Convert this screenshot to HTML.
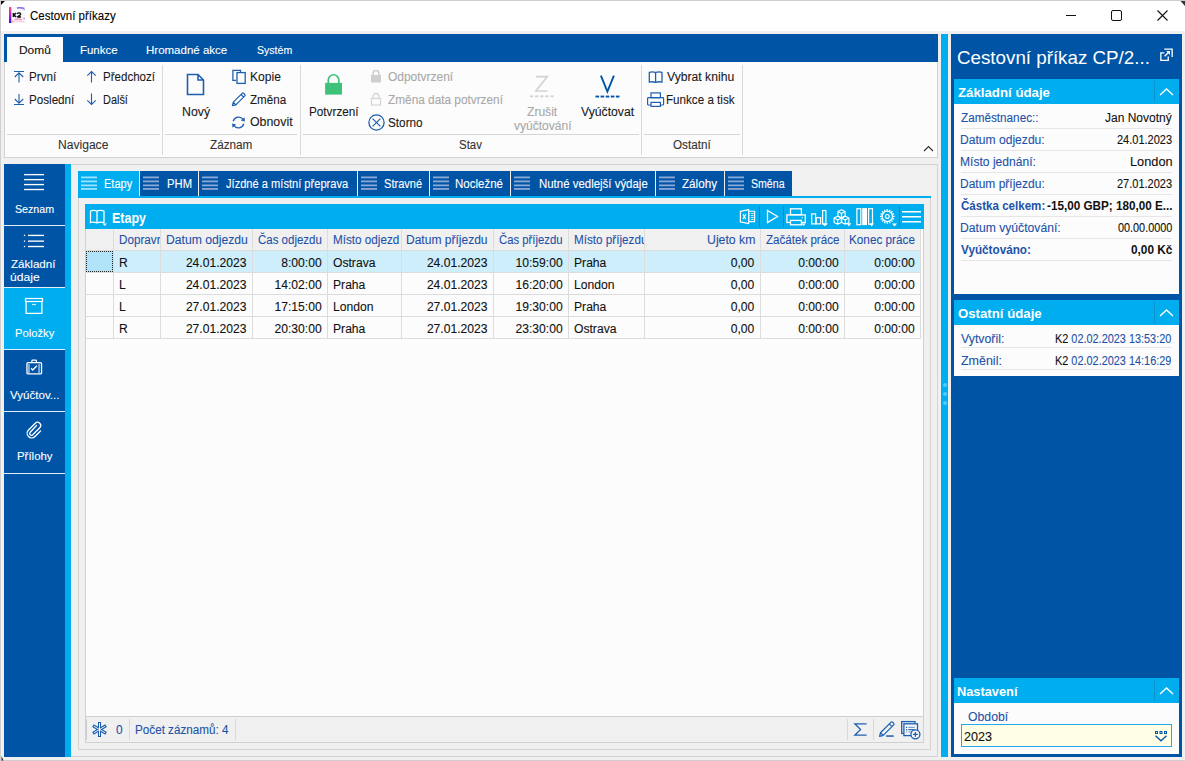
<!DOCTYPE html>
<html><head><meta charset="utf-8"><style>
html,body{margin:0;padding:0;width:1186px;height:761px;overflow:hidden;position:relative;background:#f0f0f0}
body{font-family:"Liberation Sans",sans-serif}
.t{position:absolute;white-space:nowrap;-webkit-text-stroke:0.1px currentColor}
svg{overflow:visible}
</style></head><body>
<div style="position:absolute;left:0px;top:0px;width:1186px;height:761px;background:#f0f0f0"></div>
<div style="position:absolute;left:0px;top:0px;width:1186px;height:31px;background:#ffffff"></div>
<div style="position:absolute;left:0px;top:0px;width:1186px;height:1px;background:#cfcfcf"></div>
<div style="position:absolute;left:0px;top:0px;width:1px;height:761px;background:#cfcfcf"></div>
<div style="position:absolute;left:1185px;top:0px;width:1px;height:761px;background:#cfcfcf"></div>
<div style="position:absolute;left:0px;top:760px;width:1186px;height:1px;background:#cfcfcf"></div>
<svg style="position:absolute;left:0;top:0" width="8" height="8"><path d="M1 1 H5 L1 5 Z" fill="#111"/></svg>
<svg style="position:absolute;left:1176px;top:0" width="10" height="10"><path d="M9 1 H4.5 L9 6 Z" fill="#333"/></svg>
<svg style="position:absolute;left:0;top:752px" width="8" height="9"><path d="M1.5 4 L3.5 8.5 L1.5 8.5 Z" fill="#222"/></svg>
<svg style="position:absolute;left:9px;top:7px" width="16" height="16" viewBox="0 0 16 16"><defs><linearGradient id="lg" x1="0" y1="0" x2="0" y2="1"><stop offset="0" stop-color="#ff5060"/><stop offset="0.5" stop-color="#cc10e0"/><stop offset="1" stop-color="#2010ff"/></linearGradient></defs>
<rect x="0" y="0" width="16" height="16" fill="#f8f8fc"/><rect x="0" y="0" width="2.3" height="16" fill="url(#lg)"/>
<path d="M8 1.1 Q11.5 0.3 15.4 1.4" stroke="#6a50f0" stroke-width="1.5" fill="none" opacity="0.85"/><circle cx="15.2" cy="2.6" r="0.9" fill="#a080f0" opacity="0.7"/>
<path d="M5.5 12.6 Q9.5 11.2 13 12.8" stroke="#f070a0" stroke-width="1.4" fill="none" opacity="0.7"/><path d="M2.6 14.6 Q8 13.6 15.4 14.8" stroke="#f8b0c8" stroke-width="1.4" fill="none" opacity="0.6"/><circle cx="15.1" cy="11.6" r="1" fill="#c070f0" opacity="0.7"/><rect x="2.3" y="13.6" width="2" height="2" fill="#ff9a70" opacity="0.7"/>
<path d="M4.4 6 V10 M7.1 6 L4.9 8 L7.2 10" stroke="#111" stroke-width="1.5" fill="none"/><path d="M8.1 6.9 Q8.8 5.8 10.2 5.9 Q11.8 6.1 11.5 7.5 Q11.2 8.4 8.2 10 H12.1" stroke="#111" stroke-width="1.4" fill="none"/></svg>
<div class="t" style="left:29.82px;top:8.27px;font-size:12.5px;line-height:16px;color:#000;font-weight:normal;transform:scaleX(0.9200);transform-origin:0 0;">Cestovní příkazy</div>
<div style="position:absolute;left:1066px;top:15px;width:10px;height:1px;background:#111"></div>
<svg style="position:absolute;left:1111px;top:10px" width="11" height="11" viewBox="0 0 11 11"><rect x="0.5" y="0.5" width="10" height="10" rx="1.5" fill="none" stroke="#111" stroke-width="1"/></svg>
<svg style="position:absolute;left:1157px;top:10px" width="11" height="11" viewBox="0 0 11 11"><path d="M0.5 0.5 L10.5 10.5 M10.5 0.5 L0.5 10.5" stroke="#111" stroke-width="1.1"/></svg>
<div style="position:absolute;left:4px;top:34px;width:934px;height:28px;background:#0054a6"></div>
<div style="position:absolute;left:7px;top:37px;width:56px;height:25px;background:#fcfcfc"></div>
<div class="t" style="left:18.64px;top:43.48px;font-size:11.3px;line-height:14px;color:#111;font-weight:normal;transform:scaleX(1.0570);transform-origin:0 0;">Domů</div>
<div class="t" style="left:79.68px;top:43.48px;font-size:11.3px;line-height:14px;color:#fff;font-weight:normal;transform:scaleX(1.0142);transform-origin:0 0;">Funkce</div>
<div class="t" style="left:146.28px;top:43.48px;font-size:11.3px;line-height:14px;color:#fff;font-weight:normal;transform:scaleX(1.0178);transform-origin:0 0;">Hromadné akce</div>
<div class="t" style="left:257.17px;top:43.48px;font-size:11.3px;line-height:14px;color:#fff;font-weight:normal;transform:scaleX(0.9344);transform-origin:0 0;">Systém</div>
<div style="position:absolute;left:4px;top:62px;width:934px;height:96px;background:#fcfcfc;box-sizing:border-box;border:1px solid #d2d2d2;border-top:none"></div>
<div style="position:absolute;left:162px;top:65px;width:1px;height:90px;background:#dadada"></div>
<div style="position:absolute;left:300px;top:65px;width:1px;height:90px;background:#dadada"></div>
<div style="position:absolute;left:641px;top:65px;width:1px;height:90px;background:#dadada"></div>
<div style="position:absolute;left:742px;top:65px;width:1px;height:90px;background:#dadada"></div>
<div style="position:absolute;left:7px;top:134px;width:153px;height:1px;background:#d6d6d6"></div>
<div style="position:absolute;left:165px;top:134px;width:132px;height:1px;background:#d6d6d6"></div>
<div style="position:absolute;left:303px;top:134px;width:336px;height:1px;background:#d6d6d6"></div>
<div style="position:absolute;left:644px;top:134px;width:96px;height:1px;background:#d6d6d6"></div>
<div class="t" style="left:58.23px;top:136.77px;font-size:12.5px;line-height:16px;color:#333;font-weight:normal;transform:scaleX(0.9663);transform-origin:0 0;">Navigace</div>
<div class="t" style="left:209.65px;top:136.77px;font-size:12.5px;line-height:16px;color:#333;font-weight:normal;transform:scaleX(0.9386);transform-origin:0 0;">Záznam</div>
<div class="t" style="left:459.43px;top:136.77px;font-size:12.5px;line-height:16px;color:#333;font-weight:normal;transform:scaleX(0.9149);transform-origin:0 0;">Stav</div>
<div class="t" style="left:673.31px;top:136.77px;font-size:12.5px;line-height:16px;color:#333;font-weight:normal;transform:scaleX(0.9363);transform-origin:0 0;">Ostatní</div>
<svg style="position:absolute;left:923px;top:145px" width="11" height="7" viewBox="0 0 11 7"><path d="M1 6 L5.5 1.5 L10 6" stroke="#333" stroke-width="1.2" fill="none"/></svg>
<svg style="position:absolute;left:13px;top:70px" width="12" height="13" viewBox="0 0 12 13"><path d="M1 1.5 H11 M6 3 V12.5 M1.8 7 L6 2.8 L10.2 7" stroke="#1f5fb0" stroke-width="1.1" fill="none"/></svg>
<div class="t" style="left:29.46px;top:69.07px;font-size:12.5px;line-height:16px;color:#1a1a1a;font-weight:normal;transform:scaleX(0.9351);transform-origin:0 0;">První</div>
<svg style="position:absolute;left:13px;top:93px" width="12" height="13" viewBox="0 0 12 13"><path d="M1 11.5 H11 M6 1 V10 M1.8 6 L6 10.2 L10.2 6" stroke="#1f5fb0" stroke-width="1.1" fill="none"/></svg>
<div class="t" style="left:29.47px;top:92.07px;font-size:12.5px;line-height:16px;color:#1a1a1a;font-weight:normal;transform:scaleX(0.9305);transform-origin:0 0;">Poslední</div>
<svg style="position:absolute;left:86px;top:70px" width="11" height="13" viewBox="0 0 11 13"><path d="M5.5 1.5 V12.5 M1.3 5.7 L5.5 1.5 L9.7 5.7" stroke="#1f5fb0" stroke-width="1.1" fill="none"/></svg>
<div class="t" style="left:102.68px;top:69.07px;font-size:12.5px;line-height:16px;color:#1a1a1a;font-weight:normal;transform:scaleX(0.9234);transform-origin:0 0;">Předchozí</div>
<svg style="position:absolute;left:86px;top:93px" width="11" height="13" viewBox="0 0 11 13"><path d="M5.5 0.5 V11.5 M1.3 7.3 L5.5 11.5 L9.7 7.3" stroke="#1f5fb0" stroke-width="1.1" fill="none"/></svg>
<div class="t" style="left:102.73px;top:92.07px;font-size:12.5px;line-height:16px;color:#1a1a1a;font-weight:normal;transform:scaleX(0.8731);transform-origin:0 0;">Další</div>
<svg style="position:absolute;left:186px;top:73px" width="19" height="23" viewBox="0 0 19 23"><path d="M1.5 1.5 H12 L17.5 7 V21.5 H1.5 Z M12 1.5 V7 H17.5" stroke="#1f5fb0" stroke-width="1.6" fill="none" stroke-linejoin="miter"/></svg>
<div class="t" style="left:181.61px;top:103.97px;font-size:12.5px;line-height:16px;color:#1a1a1a;font-weight:normal;transform:scaleX(0.9855);transform-origin:0 0;">Nový</div>
<svg style="position:absolute;left:231px;top:69px" width="15" height="16" viewBox="0 0 15 16"><path d="M5 11.4 H1.9 V1.4 H9.5 V3" stroke="#1f5fb0" stroke-width="1.3" fill="none"/><rect x="6" y="3.6" width="8.2" height="10.8" stroke="#1f5fb0" stroke-width="1.3" fill="none"/></svg>
<div class="t" style="left:249.63px;top:68.97px;font-size:12.5px;line-height:16px;color:#1a1a1a;font-weight:normal;transform:scaleX(0.9679);transform-origin:0 0;">Kopie</div>
<svg style="position:absolute;left:231px;top:92px" width="16" height="15" viewBox="0 0 16 15"><path d="M1.4 13.6 L2.3 10.2 L11.2 1.3 Q11.9 0.6 12.6 1.3 L13.8 2.5 Q14.5 3.2 13.8 3.9 L4.9 12.8 Z M10 2.5 L12.6 5.1 M2.3 10.2 L4.9 12.8" stroke="#1f5fb0" stroke-width="1.2" fill="none" stroke-linejoin="round"/></svg>
<div class="t" style="left:250.25px;top:91.97px;font-size:12.5px;line-height:16px;color:#1a1a1a;font-weight:normal;transform:scaleX(0.9294);transform-origin:0 0;">Změna</div>
<svg style="position:absolute;left:231px;top:115px" width="15" height="15" viewBox="0 0 15 15"><path d="M2.2 6.2 A5.6 5.6 0 0 1 12.2 4.6" stroke="#1f5fb0" stroke-width="1.3" fill="none"/><path d="M9.9 5.6 L13.9 6.4 L13.5 2.3 Z" fill="#1f5fb0"/><path d="M12.8 8.8 A5.6 5.6 0 0 1 2.8 10.4" stroke="#1f5fb0" stroke-width="1.3" fill="none"/><path d="M5.1 9.4 L1.1 8.6 L1.5 12.7 Z" fill="#1f5fb0"/></svg>
<div class="t" style="left:249.98px;top:114.47px;font-size:12.5px;line-height:16px;color:#1a1a1a;font-weight:normal;transform:scaleX(0.9888);transform-origin:0 0;">Obnovit</div>
<svg style="position:absolute;left:315px;top:62px" width="40" height="40" viewBox="0 0 40 40"><path d="M328.3 83.5 V80 A5.25 5.25 0 0 1 338.8 80 V83.5" transform="translate(-315 -62)" stroke="#3ec27a" stroke-width="1.7" fill="none"/><rect x="10.1" y="20.9" width="16.9" height="11.7" fill="#3ec27a"/></svg>
<div class="t" style="left:308.76px;top:104.27px;font-size:12.5px;line-height:16px;color:#1a1a1a;font-weight:normal;transform:scaleX(0.9391);transform-origin:0 0;">Potvrzení</div>
<svg style="position:absolute;left:370px;top:69px" width="12" height="14" viewBox="0 0 12 14"><path d="M3 6 V4.5 A3 3 0 0 1 9 4.5 V6" stroke="#cfcfcf" stroke-width="1.6" fill="none"/><rect x="1" y="6" width="10" height="7.5" fill="#cfcfcf"/></svg>
<div class="t" style="left:388.10px;top:68.97px;font-size:12.5px;line-height:16px;color:#a8a8a8;font-weight:normal;transform:scaleX(0.9573);transform-origin:0 0;">Odpotvrzení</div>
<svg style="position:absolute;left:370px;top:92px" width="12" height="14" viewBox="0 0 12 14"><path d="M3 6 V4.5 A3 3 0 0 1 9 4.5 V6" stroke="#d4d4d4" stroke-width="1.3" fill="none"/><rect x="1.5" y="6.5" width="9" height="6.5" stroke="#d4d4d4" stroke-width="1.2" fill="none"/></svg>
<div class="t" style="left:387.95px;top:91.77px;font-size:12.5px;line-height:16px;color:#a8a8a8;font-weight:normal;transform:scaleX(0.9453);transform-origin:0 0;">Změna data potvrzení</div>
<svg style="position:absolute;left:368px;top:114px" width="18" height="18" viewBox="0 0 18 18"><circle cx="8.5" cy="8.5" r="7.6" stroke="#1f5fb0" stroke-width="1.3" fill="none"/><path d="M4.6 4.6 L12.4 12.4 M12.4 4.6 L4.6 12.4" stroke="#1f5fb0" stroke-width="1.2"/></svg>
<div class="t" style="left:388.11px;top:114.87px;font-size:12.5px;line-height:16px;color:#1a1a1a;font-weight:normal;transform:scaleX(0.9399);transform-origin:0 0;">Storno</div>
<svg style="position:absolute;left:520px;top:65px" width="40" height="40" viewBox="0 0 40 40"><path d="M15.8 11.6 H27.4 L15.8 26 H27.4" stroke="#d2d2d2" stroke-width="1.6" fill="none" stroke-linejoin="miter"/><rect x="10.0" y="30.4" width="3.2" height="1.8" fill="#d2d2d2"/><rect x="15.1" y="30.4" width="3.2" height="1.8" fill="#d2d2d2"/><rect x="20.2" y="30.4" width="3.2" height="1.8" fill="#d2d2d2"/><rect x="25.3" y="30.4" width="3.2" height="1.8" fill="#d2d2d2"/><rect x="30.4" y="30.4" width="3.2" height="1.8" fill="#d2d2d2"/></svg>
<div class="t" style="left:526.64px;top:104.27px;font-size:12.5px;line-height:16px;color:#a8a8a8;font-weight:normal;transform:scaleX(0.9659);transform-origin:0 0;">Zrušit</div>
<div class="t" style="left:513.50px;top:118.47px;font-size:12.5px;line-height:16px;color:#a8a8a8;font-weight:normal;transform:scaleX(0.9627);transform-origin:0 0;">vyúčtování</div>
<svg style="position:absolute;left:590px;top:65px" width="40" height="40" viewBox="0 0 40 40"><path d="M10.9 10.7 L17.4 26.6 L23.9 10.7" stroke="#0054a6" stroke-width="1.9" fill="none" stroke-linejoin="miter"/><rect x="5.5" y="30.6" width="3.6" height="1.9" fill="#0054a6"/><rect x="10.6" y="30.6" width="3.6" height="1.9" fill="#0054a6"/><rect x="15.7" y="30.6" width="3.6" height="1.9" fill="#0054a6"/><rect x="20.8" y="30.6" width="3.6" height="1.9" fill="#0054a6"/><rect x="25.9" y="30.6" width="3.6" height="1.9" fill="#0054a6"/></svg>
<div class="t" style="left:580.88px;top:103.77px;font-size:12.5px;line-height:16px;color:#1a1a1a;font-weight:normal;transform:scaleX(0.9751);transform-origin:0 0;">Vyúčtovat</div>
<svg style="position:absolute;left:645px;top:68px" width="20" height="17" viewBox="0 0 20 17"><path d="M4.3 4.4 Q7 3.2 10.6 4.4 Q14.2 3.2 17 4.4 V14.2 Q14.2 13.2 10.6 14.4 Q7 13.2 4.3 14.2 Z M10.6 4.4 V14.4" stroke="#1f5fb0" stroke-width="1.3" fill="none" stroke-linejoin="round"/></svg>
<div class="t" style="left:667.18px;top:69.07px;font-size:12.5px;line-height:16px;color:#1a1a1a;font-weight:normal;transform:scaleX(0.9732);transform-origin:0 0;">Vybrat knihu</div>
<svg style="position:absolute;left:647px;top:92px" width="17" height="15" viewBox="0 0 17 15"><rect x="4" y="0.9" width="9.4" height="4.8" stroke="#1f5fb0" stroke-width="1.2" fill="none"/><rect x="0.6" y="5.6" width="16" height="7.4" rx="0.8" stroke="#1f5fb0" stroke-width="1.2" fill="none"/><rect x="4" y="10.4" width="9.4" height="4" stroke="#1f5fb0" stroke-width="1.2" fill="#fcfcfc"/></svg>
<div class="t" style="left:666.37px;top:91.77px;font-size:12.5px;line-height:16px;color:#1a1a1a;font-weight:normal;transform:scaleX(0.9308);transform-origin:0 0;">Funkce a tisk</div>
<div style="position:absolute;left:4px;top:164px;width:61px;height:593px;background:#0054a6"></div>
<div style="position:absolute;left:65px;top:164px;width:6px;height:593px;background:#00aeef"></div>
<div style="position:absolute;left:4px;top:288px;width:61px;height:61px;background:#00aeef"></div>
<div style="position:absolute;left:4px;top:225px;width:61px;height:1px;background:#e6eef8"></div>
<div style="position:absolute;left:4px;top:287px;width:61px;height:1px;background:#e6eef8"></div>
<div style="position:absolute;left:4px;top:349px;width:61px;height:1px;background:#e6eef8"></div>
<div style="position:absolute;left:4px;top:411px;width:61px;height:1px;background:#e6eef8"></div>
<div style="position:absolute;left:4px;top:473px;width:61px;height:1px;background:#e6eef8"></div>
<svg style="position:absolute;left:24px;top:173px" width="20" height="18" viewBox="0 0 20 18"><rect x="0" y="0.95" width="20" height="1.35" fill="#fff"/><rect x="0" y="5.95" width="20" height="1.35" fill="#fff"/><rect x="0" y="10.9" width="20" height="1.35" fill="#fff"/><rect x="0" y="15.85" width="20" height="1.35" fill="#fff"/></svg>
<div class="t" style="left:15.27px;top:201.62px;font-size:11.5px;line-height:14px;color:#fff;font-weight:normal;transform:scaleX(0.9257);transform-origin:0 0;">Seznam</div>
<svg style="position:absolute;left:23px;top:233px" width="22" height="15" viewBox="0 0 22 15"><rect x="0.9" y="1.75" width="1.3" height="1.3" fill="#fff"/><rect x="5" y="1.75" width="16" height="1.35" fill="#fff"/><rect x="0.9" y="7.45" width="1.3" height="1.3" fill="#fff"/><rect x="5" y="7.45" width="16" height="1.35" fill="#fff"/><rect x="0.9" y="12.85" width="1.3" height="1.3" fill="#fff"/><rect x="5" y="12.85" width="16" height="1.35" fill="#fff"/></svg>
<div class="t" style="left:10.85px;top:257.32px;font-size:11.5px;line-height:14px;color:#fff;font-weight:normal;transform:scaleX(1.0069);transform-origin:0 0;">Základní</div>
<div class="t" style="left:10.35px;top:270.22px;font-size:11.5px;line-height:14px;color:#fff;font-weight:normal;transform:scaleX(1.0524);transform-origin:0 0;">údaje</div>
<svg style="position:absolute;left:18px;top:292px" width="32" height="28" viewBox="0 0 32 28"><rect x="7.5" y="6.5" width="17" height="3" stroke="#fff" stroke-width="1.2" fill="none"/><path d="M8.1 9.5 V21.4 H23.9 V9.5" stroke="#fff" stroke-width="1.25" fill="none"/><rect x="14" y="11.9" width="4" height="1.2" fill="#cdeffc"/></svg>
<div class="t" style="left:14.60px;top:325.72px;font-size:11.5px;line-height:14px;color:#fff;font-weight:normal;transform:scaleX(0.9764);transform-origin:0 0;">Položky</div>
<svg style="position:absolute;left:18px;top:352px" width="32" height="28" viewBox="0 0 32 28"><rect x="8.95" y="10.55" width="14.6" height="11.4" rx="1.2" stroke="#fff" stroke-width="1.3" fill="none"/><path d="M13.9 10.5 V8.7 Q13.9 8.1 14.5 8.1 H17.8 Q18.4 8.1 18.4 8.7 V10.5" stroke="#fff" stroke-width="1.2" fill="none"/><rect x="10.3" y="12" width="1.3" height="9.3" fill="#bcd0e8"/><rect x="20.4" y="12" width="1.3" height="9.3" fill="#bcd0e8"/><path d="M13.1 16.3 L14.7 18 L18.9 13.7" stroke="#fff" stroke-width="1.3" fill="none"/></svg>
<div class="t" style="left:10.08px;top:387.72px;font-size:11.5px;line-height:14px;color:#fff;font-weight:normal;transform:scaleX(1.0048);transform-origin:0 0;">Vyúčtov...</div>
<svg style="position:absolute;left:25.7px;top:420px" width="18" height="20" viewBox="0 0 18 20"><path d="M10.5 5.5 L4 12.5 A1.8 1.8 0 0 0 6.5 15 L14 7.5 A3.2 3.2 0 0 0 9.5 3 L2.5 10 A4.5 4.5 0 0 0 9 16.5 L14.5 11" stroke="#fff" stroke-width="1.3" fill="none" stroke-linecap="round"/></svg>
<div class="t" style="left:16.79px;top:449.12px;font-size:11.5px;line-height:14px;color:#fff;font-weight:normal;transform:scaleX(0.9930);transform-origin:0 0;">Přílohy</div>
<div style="position:absolute;left:71px;top:164px;width:867px;height:593px;box-sizing:border-box;border:1px solid #d4d4d4;border-left:none;background:#f0f0f0"></div>
<div style="position:absolute;left:78px;top:171px;width:61px;height:25px;background:#00aeef"></div>
<svg style="position:absolute;left:81px;top:176px" width="16" height="14" viewBox="0 0 16 14"><rect x="0" y="0.5" width="16" height="1.8" fill="#9ee3fb"/><rect x="0" y="4.5" width="16" height="1.8" fill="#9ee3fb"/><rect x="0" y="8.5" width="16" height="1.8" fill="#9ee3fb"/><rect x="0" y="12" width="16" height="1.8" fill="#9ee3fb"/></svg>
<div class="t" style="left:103.82px;top:176.94px;font-size:12px;line-height:15px;color:#fff;font-weight:normal;transform:scaleX(0.9173);transform-origin:0 0;">Etapy</div>
<div style="position:absolute;left:140px;top:171px;width:58px;height:25px;background:#0054a6"></div>
<svg style="position:absolute;left:143px;top:176px" width="16" height="14" viewBox="0 0 16 14"><rect x="0" y="0.5" width="16" height="1.8" fill="#8aa9d6"/><rect x="0" y="4.5" width="16" height="1.8" fill="#8aa9d6"/><rect x="0" y="8.5" width="16" height="1.8" fill="#8aa9d6"/><rect x="0" y="12" width="16" height="1.8" fill="#8aa9d6"/></svg>
<div class="t" style="left:166.50px;top:176.94px;font-size:12px;line-height:15px;color:#fff;font-weight:normal;transform:scaleX(0.9385);transform-origin:0 0;">PHM</div>
<div style="position:absolute;left:199px;top:171px;width:158px;height:25px;background:#0054a6"></div>
<svg style="position:absolute;left:202px;top:176px" width="16" height="14" viewBox="0 0 16 14"><rect x="0" y="0.5" width="16" height="1.8" fill="#8aa9d6"/><rect x="0" y="4.5" width="16" height="1.8" fill="#8aa9d6"/><rect x="0" y="8.5" width="16" height="1.8" fill="#8aa9d6"/><rect x="0" y="12" width="16" height="1.8" fill="#8aa9d6"/></svg>
<div class="t" style="left:225.98px;top:176.94px;font-size:12px;line-height:15px;color:#fff;font-weight:normal;transform:scaleX(0.9251);transform-origin:0 0;">Jízdné a místní přeprava</div>
<div style="position:absolute;left:358px;top:171px;width:71px;height:25px;background:#0054a6"></div>
<svg style="position:absolute;left:361px;top:176px" width="16" height="14" viewBox="0 0 16 14"><rect x="0" y="0.5" width="16" height="1.8" fill="#8aa9d6"/><rect x="0" y="4.5" width="16" height="1.8" fill="#8aa9d6"/><rect x="0" y="8.5" width="16" height="1.8" fill="#8aa9d6"/><rect x="0" y="12" width="16" height="1.8" fill="#8aa9d6"/></svg>
<div class="t" style="left:383.75px;top:176.94px;font-size:12px;line-height:15px;color:#fff;font-weight:normal;transform:scaleX(0.9229);transform-origin:0 0;">Stravné</div>
<div style="position:absolute;left:430px;top:171px;width:80px;height:25px;background:#0054a6"></div>
<svg style="position:absolute;left:433px;top:176px" width="16" height="14" viewBox="0 0 16 14"><rect x="0" y="0.5" width="16" height="1.8" fill="#8aa9d6"/><rect x="0" y="4.5" width="16" height="1.8" fill="#8aa9d6"/><rect x="0" y="8.5" width="16" height="1.8" fill="#8aa9d6"/><rect x="0" y="12" width="16" height="1.8" fill="#8aa9d6"/></svg>
<div class="t" style="left:455.28px;top:176.94px;font-size:12px;line-height:15px;color:#fff;font-weight:normal;transform:scaleX(0.9592);transform-origin:0 0;">Nocležné</div>
<div style="position:absolute;left:511px;top:171px;width:144px;height:25px;background:#0054a6"></div>
<svg style="position:absolute;left:514px;top:176px" width="16" height="14" viewBox="0 0 16 14"><rect x="0" y="0.5" width="16" height="1.8" fill="#8aa9d6"/><rect x="0" y="4.5" width="16" height="1.8" fill="#8aa9d6"/><rect x="0" y="8.5" width="16" height="1.8" fill="#8aa9d6"/><rect x="0" y="12" width="16" height="1.8" fill="#8aa9d6"/></svg>
<div class="t" style="left:538.68px;top:176.94px;font-size:12px;line-height:15px;color:#fff;font-weight:normal;transform:scaleX(0.9533);transform-origin:0 0;">Nutné vedlejší výdaje</div>
<div style="position:absolute;left:656px;top:171px;width:68px;height:25px;background:#0054a6"></div>
<svg style="position:absolute;left:659px;top:176px" width="16" height="14" viewBox="0 0 16 14"><rect x="0" y="0.5" width="16" height="1.8" fill="#8aa9d6"/><rect x="0" y="4.5" width="16" height="1.8" fill="#8aa9d6"/><rect x="0" y="8.5" width="16" height="1.8" fill="#8aa9d6"/><rect x="0" y="12" width="16" height="1.8" fill="#8aa9d6"/></svg>
<div class="t" style="left:682.45px;top:176.94px;font-size:12px;line-height:15px;color:#fff;font-weight:normal;transform:scaleX(0.9708);transform-origin:0 0;">Zálohy</div>
<div style="position:absolute;left:725px;top:171px;width:67px;height:25px;background:#0054a6"></div>
<svg style="position:absolute;left:728px;top:176px" width="16" height="14" viewBox="0 0 16 14"><rect x="0" y="0.5" width="16" height="1.8" fill="#8aa9d6"/><rect x="0" y="4.5" width="16" height="1.8" fill="#8aa9d6"/><rect x="0" y="8.5" width="16" height="1.8" fill="#8aa9d6"/><rect x="0" y="12" width="16" height="1.8" fill="#8aa9d6"/></svg>
<div class="t" style="left:751.17px;top:176.94px;font-size:12px;line-height:15px;color:#fff;font-weight:normal;transform:scaleX(0.8814);transform-origin:0 0;">Směna</div>
<div style="position:absolute;left:78px;top:196px;width:853px;height:2px;background:#00aeef"></div>
<div style="position:absolute;left:78px;top:198px;width:853px;height:552px;box-sizing:border-box;border:1px solid #d4d4d4;border-top:none;background:#f0f0f0"></div>
<div style="position:absolute;left:85px;top:204px;width:839px;height:539px;box-sizing:border-box;border:1px solid #d0d0d0;border-top:none;background:#fcfcfc"></div>
<div style="position:absolute;left:85px;top:204px;width:839px;height:25px;background:#00aeef"></div>
<svg style="position:absolute;left:89px;top:209px" width="20" height="19" viewBox="0 0 20 19"><path d="M1.5 2 Q4.5 0.8 8 2 Q11.5 0.8 15 2 V13.5 Q11.5 12.5 8 13.8 Q4.5 12.5 1.5 13.5 Z M8 2 V13.8" stroke="#fff" stroke-width="1.3" fill="none"/><path d="M13.5 14.5 H18 L15.75 17 Z" fill="#fff"/></svg>
<div class="t" style="left:111.83px;top:208.75px;font-size:14px;line-height:18px;color:#fff;font-weight:bold;-webkit-text-stroke:0;transform:scaleX(0.8895);transform-origin:0 0;">Etapy</div>
<svg style="position:absolute;left:736px;top:205px" width="24" height="24" viewBox="0 0 24 24"><path d="M4.4 6.3 L12.7 4.6 V18.6 L4.4 16.9 Z" stroke="#ffffff" stroke-width="1.2" fill="none" stroke-linejoin="round"/><path d="M6.9 9.2 L9.8 14.1 M9.8 9.2 L6.9 14.1" stroke="#ffffff" stroke-width="1.2"/><path d="M12.7 6.2 H18.6 V16.6 H12.7" stroke="#ffffff" stroke-width="1.1" fill="none"/><path d="M13.3 8.5 H14.2 M15.2 8.5 H17.6 M13.3 10.5 H14.2 M15.2 10.5 H17.6 M13.3 12.5 H14.2 M15.2 12.5 H17.6 M13.3 14.5 H14.2 M15.2 14.5 H17.6" stroke="#d8f3fd" stroke-width="1"/></svg>
<div style="position:absolute;left:759px;top:206px;width:1px;height:21px;background:#0a8ac8"></div>
<svg style="position:absolute;left:766px;top:209px" width="13" height="15" viewBox="0 0 13 15"><path d="M1.5 1.5 L11.5 7.5 L1.5 13.5 Z" stroke="#ffffff" stroke-width="1.3" fill="none"/></svg>
<div style="position:absolute;left:783px;top:206px;width:1px;height:21px;background:#0a8ac8"></div>
<svg style="position:absolute;left:782px;top:205px" width="48" height="24" viewBox="0 0 48 24"><rect x="8.5" y="3.8" width="10.9" height="5.9" stroke="#ffffff" stroke-width="1.3" fill="none"/><rect x="4.9" y="9.9" width="18.4" height="7.6" stroke="#ffffff" stroke-width="1.3" fill="none"/><rect x="8.5" y="15.4" width="10.9" height="4.4" stroke="#ffffff" stroke-width="1.3" fill="#00aeef"/><path d="M19.3 18.4 H23.7 L21.5 21 Z" fill="#ffffff"/><rect x="19.6" y="12.3" width="1.3" height="0.9" fill="#ffffff"/><rect x="29.7" y="8.9" width="3.9" height="10" stroke="#ffffff" stroke-width="1.2" fill="none"/><rect x="34.2" y="12.7" width="4.4" height="6.2" stroke="#ffffff" stroke-width="1.2" fill="none"/><rect x="40.6" y="5.5" width="3.3" height="13.4" stroke="#ffffff" stroke-width="1.2" fill="none"/><path d="M39.8 18.6 H46 L42.9 21.3 Z" fill="#ffffff"/></svg>
<svg style="position:absolute;left:830px;top:204px" width="70" height="25" viewBox="0 0 70 25"><path d="M11.5 5.800000000000001 L15.1 7.6000000000000005 V12.0 L11.5 13.8 L7.9 12.0 V7.6000000000000005 Z M7.9 7.6000000000000005 L11.5 9.4 L15.1 7.6000000000000005 M11.5 9.4 V13.8" stroke="#fff" stroke-width="1.1" fill="none" stroke-linejoin="round"/><path d="M7.7 12.3 L11.3 14.100000000000001 V18.5 L7.7 20.3 L4.1 18.5 V14.100000000000001 Z M4.1 14.100000000000001 L7.7 15.9 L11.3 14.100000000000001 M7.7 15.9 V20.3" stroke="#fff" stroke-width="1.1" fill="none" stroke-linejoin="round"/><path d="M15.3 12.3 L18.900000000000002 14.100000000000001 V18.5 L15.3 20.3 L11.700000000000001 18.5 V14.100000000000001 Z M11.700000000000001 14.100000000000001 L15.3 15.9 L18.900000000000002 14.100000000000001 M15.3 15.9 V20.3" stroke="#fff" stroke-width="1.1" fill="none" stroke-linejoin="round"/><path d="M16.5 19.2 H21.3 L18.9 22.4 Z" fill="#fff"/><rect x="26.9" y="4.7" width="3.9" height="16" stroke="#fff" stroke-width="1.2" fill="none"/><rect x="32.2" y="4.1" width="4.8" height="17" fill="#fff"/><rect x="38.6" y="4.7" width="3.9" height="15.5" stroke="#fff" stroke-width="1.2" fill="none"/><path d="M39.5 19.2 H44 L41.75 22.4 Z" fill="#fff"/><path d="M62.90 12.40 L64.60 12.40 M62.47 14.54 L64.04 15.19 M61.26 16.36 L62.46 17.56 M59.44 17.57 L60.09 19.14 M57.30 18.00 L57.30 19.70 M55.16 17.57 L54.51 19.14 M53.34 16.36 L52.14 17.56 M52.13 14.54 L50.56 15.19 M51.70 12.40 L50.00 12.40 M52.13 10.26 L50.56 9.61 M53.34 8.44 L52.14 7.24 M55.16 7.23 L54.51 5.66 M57.30 6.80 L57.30 5.10 M59.44 7.23 L60.09 5.66 M61.26 8.44 L62.46 7.24 M62.47 10.26 L64.04 9.61" stroke="#fff" stroke-width="1.3"/><circle cx="57.3" cy="12.4" r="5.2" stroke="#fff" stroke-width="1.3" fill="none"/><circle cx="57.3" cy="12.4" r="1.9" stroke="#fff" stroke-width="1.2" fill="none"/><path d="M62 19.4 H67 L64.5 22.4 Z" fill="#fff"/></svg>
<div style="position:absolute;left:899px;top:206px;width:1px;height:21px;background:#0a8ac8"></div>
<svg style="position:absolute;left:902px;top:210px" width="19" height="13" viewBox="0 0 19 13"><rect x="0" y="1" width="19" height="1.5" fill="#ffffff"/><rect x="0" y="6" width="19" height="1.5" fill="#ffffff"/><rect x="0" y="11" width="19" height="1.5" fill="#ffffff"/></svg>
<div style="position:absolute;left:86px;top:229px;width:834px;height:22px;background:#f0f0f0"></div>
<div style="position:absolute;left:920px;top:229px;width:3px;height:487px;background:#fcfcfc"></div>
<div style="position:absolute;left:113px;top:251px;width:807px;height:21px;background:#cdeefa"></div>
<div style="position:absolute;left:86px;top:251px;width:27px;height:21px;background:#b1e4f9;box-sizing:border-box;border:1px dotted #222"></div>
<div style="position:absolute;left:85px;top:250px;width:835px;height:1px;background:#dcdcdc"></div>
<div style="position:absolute;left:85px;top:272px;width:835px;height:1px;background:#dcdcdc"></div>
<div style="position:absolute;left:85px;top:294px;width:835px;height:1px;background:#dcdcdc"></div>
<div style="position:absolute;left:85px;top:316px;width:835px;height:1px;background:#dcdcdc"></div>
<div style="position:absolute;left:85px;top:338px;width:835px;height:1px;background:#dcdcdc"></div>
<div style="position:absolute;left:113px;top:229px;width:1px;height:110px;background:#dcdcdc"></div>
<div style="position:absolute;left:160px;top:229px;width:1px;height:110px;background:#dcdcdc"></div>
<div style="position:absolute;left:252px;top:229px;width:1px;height:110px;background:#dcdcdc"></div>
<div style="position:absolute;left:327px;top:229px;width:1px;height:110px;background:#dcdcdc"></div>
<div style="position:absolute;left:401px;top:229px;width:1px;height:110px;background:#dcdcdc"></div>
<div style="position:absolute;left:493px;top:229px;width:1px;height:110px;background:#dcdcdc"></div>
<div style="position:absolute;left:568px;top:229px;width:1px;height:110px;background:#dcdcdc"></div>
<div style="position:absolute;left:644px;top:229px;width:1px;height:110px;background:#dcdcdc"></div>
<div style="position:absolute;left:760px;top:229px;width:1px;height:110px;background:#dcdcdc"></div>
<div style="position:absolute;left:844px;top:229px;width:1px;height:110px;background:#dcdcdc"></div>
<div style="position:absolute;left:920px;top:229px;width:1px;height:110px;background:#dcdcdc"></div>
<div style="position:absolute;left:114px;top:0;width:46px;height:761px;overflow:hidden"><div class="t" style="left:4.56px;top:231.87px;font-size:12.5px;line-height:16px;color:#1d52a8;font-weight:normal;transform:scaleX(0.9350);transform-origin:0 0;">Dopravr</div></div>
<div class="t" style="left:165.63px;top:231.87px;font-size:12.5px;line-height:16px;color:#1d52a8;font-weight:normal;transform:scaleX(0.9739);transform-origin:0 0;">Datum odjezdu</div>
<div class="t" style="left:258.13px;top:231.87px;font-size:12.5px;line-height:16px;color:#1d52a8;font-weight:normal;transform:scaleX(0.9191);transform-origin:0 0;">Čas odjezdu</div>
<div style="position:absolute;left:328px;top:0;width:73px;height:761px;overflow:hidden"><div class="t" style="left:4.87px;top:231.87px;font-size:12.5px;line-height:16px;color:#1d52a8;font-weight:normal;transform:scaleX(0.9350);transform-origin:0 0;">Místo odjezd</div></div>
<div class="t" style="left:406.44px;top:231.87px;font-size:12.5px;line-height:16px;color:#1d52a8;font-weight:normal;transform:scaleX(0.9617);transform-origin:0 0;">Datum příjezdu</div>
<div class="t" style="left:499.43px;top:231.87px;font-size:12.5px;line-height:16px;color:#1d52a8;font-weight:normal;transform:scaleX(0.9062);transform-origin:0 0;">Čas příjezdu</div>
<div style="position:absolute;left:569px;top:0;width:75px;height:761px;overflow:hidden"><div class="t" style="left:4.67px;top:231.87px;font-size:12.5px;line-height:16px;color:#1d52a8;font-weight:normal;transform:scaleX(0.9350);transform-origin:0 0;">Místo příjezdu</div></div>
<div class="t" style="left:706.52px;top:231.87px;font-size:12.5px;line-height:16px;color:#1d52a8;font-weight:normal;transform:scaleX(0.9832);transform-origin:0 0;">Ujeto km</div>
<div class="t" style="left:765.95px;top:231.87px;font-size:12.5px;line-height:16px;color:#1d52a8;font-weight:normal;transform:scaleX(0.9265);transform-origin:0 0;">Začátek práce</div>
<div class="t" style="left:849.36px;top:231.87px;font-size:12.5px;line-height:16px;color:#1d52a8;font-weight:normal;transform:scaleX(0.9399);transform-origin:0 0;">Konec práce</div>
<div class="t" style="left:118.53px;top:255.27px;font-size:12.5px;line-height:16px;color:#111;font-weight:normal;transform:scaleX(0.9700);transform-origin:0 0;">R</div>
<div class="t" style="right:939.66px;top:255.27px;font-size:12.5px;line-height:16px;color:#111;font-weight:normal;transform:scaleX(0.9700);transform-origin:100% 0;">24.01.2023</div>
<div class="t" style="right:864.76px;top:255.27px;font-size:12.5px;line-height:16px;color:#111;font-weight:normal;transform:scaleX(0.9700);transform-origin:100% 0;">8:00:00</div>
<div class="t" style="left:332.89px;top:255.27px;font-size:12.5px;line-height:16px;color:#111;font-weight:normal;transform:scaleX(0.9700);transform-origin:0 0;">Ostrava</div>
<div class="t" style="right:698.66px;top:255.27px;font-size:12.5px;line-height:16px;color:#111;font-weight:normal;transform:scaleX(0.9700);transform-origin:100% 0;">24.01.2023</div>
<div class="t" style="right:623.81px;top:255.27px;font-size:12.5px;line-height:16px;color:#111;font-weight:normal;transform:scaleX(0.9700);transform-origin:100% 0;">10:59:00</div>
<div class="t" style="left:573.53px;top:255.27px;font-size:12.5px;line-height:16px;color:#111;font-weight:normal;transform:scaleX(0.9700);transform-origin:0 0;">Praha</div>
<div class="t" style="right:431.76px;top:255.27px;font-size:12.5px;line-height:16px;color:#111;font-weight:normal;transform:scaleX(0.9700);transform-origin:100% 0;">0,00</div>
<div class="t" style="right:347.76px;top:255.27px;font-size:12.5px;line-height:16px;color:#111;font-weight:normal;transform:scaleX(0.9700);transform-origin:100% 0;">0:00:00</div>
<div class="t" style="right:271.76px;top:255.27px;font-size:12.5px;line-height:16px;color:#111;font-weight:normal;transform:scaleX(0.9700);transform-origin:100% 0;">0:00:00</div>
<div class="t" style="left:118.53px;top:277.27px;font-size:12.5px;line-height:16px;color:#111;font-weight:normal;transform:scaleX(0.9700);transform-origin:0 0;">L</div>
<div class="t" style="right:939.66px;top:277.27px;font-size:12.5px;line-height:16px;color:#111;font-weight:normal;transform:scaleX(0.9700);transform-origin:100% 0;">24.01.2023</div>
<div class="t" style="right:864.81px;top:277.27px;font-size:12.5px;line-height:16px;color:#111;font-weight:normal;transform:scaleX(0.9700);transform-origin:100% 0;">14:02:00</div>
<div class="t" style="left:332.53px;top:277.27px;font-size:12.5px;line-height:16px;color:#111;font-weight:normal;transform:scaleX(0.9700);transform-origin:0 0;">Praha</div>
<div class="t" style="right:698.66px;top:277.27px;font-size:12.5px;line-height:16px;color:#111;font-weight:normal;transform:scaleX(0.9700);transform-origin:100% 0;">24.01.2023</div>
<div class="t" style="right:623.81px;top:277.27px;font-size:12.5px;line-height:16px;color:#111;font-weight:normal;transform:scaleX(0.9700);transform-origin:100% 0;">16:20:00</div>
<div class="t" style="left:573.53px;top:277.27px;font-size:12.5px;line-height:16px;color:#111;font-weight:normal;transform:scaleX(0.9700);transform-origin:0 0;">London</div>
<div class="t" style="right:431.76px;top:277.27px;font-size:12.5px;line-height:16px;color:#111;font-weight:normal;transform:scaleX(0.9700);transform-origin:100% 0;">0,00</div>
<div class="t" style="right:347.76px;top:277.27px;font-size:12.5px;line-height:16px;color:#111;font-weight:normal;transform:scaleX(0.9700);transform-origin:100% 0;">0:00:00</div>
<div class="t" style="right:271.76px;top:277.27px;font-size:12.5px;line-height:16px;color:#111;font-weight:normal;transform:scaleX(0.9700);transform-origin:100% 0;">0:00:00</div>
<div class="t" style="left:118.53px;top:299.27px;font-size:12.5px;line-height:16px;color:#111;font-weight:normal;transform:scaleX(0.9700);transform-origin:0 0;">L</div>
<div class="t" style="right:939.66px;top:299.27px;font-size:12.5px;line-height:16px;color:#111;font-weight:normal;transform:scaleX(0.9700);transform-origin:100% 0;">27.01.2023</div>
<div class="t" style="right:864.81px;top:299.27px;font-size:12.5px;line-height:16px;color:#111;font-weight:normal;transform:scaleX(0.9700);transform-origin:100% 0;">17:15:00</div>
<div class="t" style="left:332.53px;top:299.27px;font-size:12.5px;line-height:16px;color:#111;font-weight:normal;transform:scaleX(0.9700);transform-origin:0 0;">London</div>
<div class="t" style="right:698.66px;top:299.27px;font-size:12.5px;line-height:16px;color:#111;font-weight:normal;transform:scaleX(0.9700);transform-origin:100% 0;">27.01.2023</div>
<div class="t" style="right:623.81px;top:299.27px;font-size:12.5px;line-height:16px;color:#111;font-weight:normal;transform:scaleX(0.9700);transform-origin:100% 0;">19:30:00</div>
<div class="t" style="left:573.53px;top:299.27px;font-size:12.5px;line-height:16px;color:#111;font-weight:normal;transform:scaleX(0.9700);transform-origin:0 0;">Praha</div>
<div class="t" style="right:431.76px;top:299.27px;font-size:12.5px;line-height:16px;color:#111;font-weight:normal;transform:scaleX(0.9700);transform-origin:100% 0;">0,00</div>
<div class="t" style="right:347.76px;top:299.27px;font-size:12.5px;line-height:16px;color:#111;font-weight:normal;transform:scaleX(0.9700);transform-origin:100% 0;">0:00:00</div>
<div class="t" style="right:271.76px;top:299.27px;font-size:12.5px;line-height:16px;color:#111;font-weight:normal;transform:scaleX(0.9700);transform-origin:100% 0;">0:00:00</div>
<div class="t" style="left:118.53px;top:321.27px;font-size:12.5px;line-height:16px;color:#111;font-weight:normal;transform:scaleX(0.9700);transform-origin:0 0;">R</div>
<div class="t" style="right:939.66px;top:321.27px;font-size:12.5px;line-height:16px;color:#111;font-weight:normal;transform:scaleX(0.9700);transform-origin:100% 0;">27.01.2023</div>
<div class="t" style="right:864.81px;top:321.27px;font-size:12.5px;line-height:16px;color:#111;font-weight:normal;transform:scaleX(0.9700);transform-origin:100% 0;">20:30:00</div>
<div class="t" style="left:332.53px;top:321.27px;font-size:12.5px;line-height:16px;color:#111;font-weight:normal;transform:scaleX(0.9700);transform-origin:0 0;">Praha</div>
<div class="t" style="right:698.66px;top:321.27px;font-size:12.5px;line-height:16px;color:#111;font-weight:normal;transform:scaleX(0.9700);transform-origin:100% 0;">27.01.2023</div>
<div class="t" style="right:623.81px;top:321.27px;font-size:12.5px;line-height:16px;color:#111;font-weight:normal;transform:scaleX(0.9700);transform-origin:100% 0;">23:30:00</div>
<div class="t" style="left:573.89px;top:321.27px;font-size:12.5px;line-height:16px;color:#111;font-weight:normal;transform:scaleX(0.9700);transform-origin:0 0;">Ostrava</div>
<div class="t" style="right:431.76px;top:321.27px;font-size:12.5px;line-height:16px;color:#111;font-weight:normal;transform:scaleX(0.9700);transform-origin:100% 0;">0,00</div>
<div class="t" style="right:347.76px;top:321.27px;font-size:12.5px;line-height:16px;color:#111;font-weight:normal;transform:scaleX(0.9700);transform-origin:100% 0;">0:00:00</div>
<div class="t" style="right:271.76px;top:321.27px;font-size:12.5px;line-height:16px;color:#111;font-weight:normal;transform:scaleX(0.9700);transform-origin:100% 0;">0:00:00</div>
<div style="position:absolute;left:86px;top:716px;width:837px;height:26px;background:#f0f0f0;border-top:1px solid #d0d0d0;box-sizing:border-box"></div>
<div style="position:absolute;left:86px;top:719px;width:1px;height:21px;background:#cfcfcf"></div>
<svg style="position:absolute;left:91px;top:721px" width="17" height="17" viewBox="0 0 17 17"><path d="M8.50 0.90 L8.50 16.10 M15.08 4.70 L1.92 12.30 M15.08 12.30 L1.92 4.70" stroke="#1f5fb0" stroke-width="3.1" stroke-linecap="butt"/><path d="M8.50 2.00 L8.50 15.00 M14.13 5.25 L2.87 11.75 M14.13 11.75 L2.87 5.25" stroke="#f0f0f0" stroke-width="1.0" stroke-linecap="butt"/></svg>
<div class="t" style="left:115.53px;top:722.07px;font-size:12.5px;line-height:16px;color:#1d52a8;font-weight:normal;transform:scaleX(0.9500);transform-origin:0 0;">0</div>
<div style="position:absolute;left:129px;top:719px;width:1px;height:21px;background:#d8d8d8"></div>
<div class="t" style="left:135.07px;top:722.07px;font-size:12.5px;line-height:16px;color:#1d52a8;font-weight:normal;transform:scaleX(0.9347);transform-origin:0 0;">Počet záznamů: 4</div>
<div style="position:absolute;left:235px;top:719px;width:1px;height:21px;background:#d8d8d8"></div>
<div style="position:absolute;left:847px;top:719px;width:1px;height:21px;background:#d8d8d8"></div>
<svg style="position:absolute;left:853px;top:722px" width="15" height="15" viewBox="0 0 15 15"><path d="M13.6 1.8 H1.8 L7.6 7.5 L1.8 13.2 H13.6" stroke="#1f5fb0" stroke-width="1.25" fill="none"/></svg>
<div style="position:absolute;left:873px;top:719px;width:1px;height:21px;background:#d8d8d8"></div>
<svg style="position:absolute;left:876px;top:716px" width="24" height="24" viewBox="0 0 24 24"><path d="M3.6 20.4 L4.5 16.7 L14.8 6.4 Q15.8 5.4 16.8 6.4 L17.5 7.1 Q18.5 8.1 17.5 9.1 L7.2 19.4 Z M13.3 7.9 L16 10.6 M4.5 16.7 L7.2 19.4" stroke="#1f5fb0" stroke-width="1.25" fill="none" stroke-linejoin="round"/><rect x="10.1" y="19.3" width="7.6" height="1.5" fill="#1f5fb0"/></svg>
<svg style="position:absolute;left:900px;top:720px" width="22" height="22" viewBox="0 0 22 22"><rect x="1.7" y="1.6" width="13.3" height="11.8" stroke="#1f5fb0" stroke-width="1.3" fill="#f0f0f0"/><rect x="3.9" y="3.8" width="13.6" height="11.8" stroke="#1f5fb0" stroke-width="1.3" fill="#f6f6f6"/><rect x="6" y="6.8" width="1.2" height="1.2" fill="#1f5fb0"/><rect x="6" y="9.1" width="1.2" height="1.2" fill="#1f5fb0"/><rect x="6" y="11.3" width="1.2" height="1.2" fill="#7fa3d6"/><rect x="8.3" y="6.8" width="6.5" height="1.1" fill="#6f97d0"/><rect x="8.3" y="9.1" width="6.5" height="1.1" fill="#1f5fb0"/><rect x="8.3" y="11.3" width="6.5" height="1.1" fill="#7fa3d6"/><circle cx="15.4" cy="14.3" r="4.5" stroke="#1f5fb0" stroke-width="1.3" fill="#f6f6f6"/><path d="M15.4 11.9 V16.7 M13 14.3 H17.8" stroke="#1f5fb0" stroke-width="1.3"/></svg>
<div style="position:absolute;left:941px;top:34px;width:7px;height:723px;background:#00aeef"></div>
<div style="position:absolute;left:942.6px;top:382.9px;width:4px;height:4px;border-radius:2px;background:#52c9fb"></div>
<div style="position:absolute;left:942.6px;top:391.9px;width:4px;height:4px;border-radius:2px;background:#52c9fb"></div>
<div style="position:absolute;left:942.6px;top:400.8px;width:4px;height:4px;border-radius:2px;background:#52c9fb"></div>
<div style="position:absolute;left:951px;top:34px;width:231px;height:723px;background:#0054a6"></div>
<div class="t" style="left:956.86px;top:45.82px;font-size:19px;line-height:24px;color:#fff;font-weight:normal;-webkit-text-stroke:0;transform:scaleX(0.9872);transform-origin:0 0;">Cestovní příkaz CP/2...</div>
<svg style="position:absolute;left:1155px;top:44px" width="24" height="22" viewBox="0 0 24 22"><path d="M9.3 8.85 H5.85 V16.4 H13.25 V12.5" stroke="#fff" stroke-width="1.3" fill="none"/><path d="M9.2 5.1 H17.15 V13" stroke="#fff" stroke-width="1.3" fill="none"/><path d="M9.6 12.3 L13.6 8.3" stroke="#fff" stroke-width="1.4"/><path d="M11.1 7.0 H15.0 V10.9 Z" fill="#fff"/></svg>
<div style="position:absolute;left:954px;top:79px;width:225px;height:25px;background:#00aeef"></div>
<div style="position:absolute;left:1154px;top:81px;width:1px;height:21px;background:#0a94cc"></div>
<svg style="position:absolute;left:1159px;top:88px" width="15" height="8" viewBox="0 0 15 8"><path d="M1 7 L7.5 1 L14 7" stroke="#fff" stroke-width="1.4" fill="none"/></svg>
<div class="t" style="left:957.80px;top:84.02px;font-size:13.5px;line-height:17px;color:#fff;font-weight:bold;-webkit-text-stroke:0;transform:scaleX(0.9808);transform-origin:0 0;">Základní údaje</div>
<div style="position:absolute;left:954px;top:104px;width:225px;height:190px;background:#fcfcfc"></div>
<div class="t" style="left:961.05px;top:110.07px;font-size:12.5px;line-height:16px;color:#1d52a8;font-weight:normal;transform:scaleX(0.9378);transform-origin:0 0;">Zaměstnanec::</div>
<div class="t" style="left:1105.36px;top:110.07px;font-size:12.5px;line-height:16px;color:#111;font-weight:normal;transform:scaleX(0.9588);transform-origin:0 0;">Jan Novotný</div>
<div style="position:absolute;left:961px;top:128px;width:211px;height:1px;background:#e6e6e6"></div>
<div class="t" style="left:960.43px;top:132.07px;font-size:12.5px;line-height:16px;color:#1d52a8;font-weight:normal;transform:scaleX(0.9673);transform-origin:0 0;">Datum odjezdu:</div>
<div class="t" style="left:1117.45px;top:132.07px;font-size:12.5px;line-height:16px;color:#111;font-weight:normal;transform:scaleX(0.8798);transform-origin:0 0;">24.01.2023</div>
<div style="position:absolute;left:961px;top:150px;width:211px;height:1px;background:#e6e6e6"></div>
<div class="t" style="left:960.43px;top:154.07px;font-size:12.5px;line-height:16px;color:#1d52a8;font-weight:normal;transform:scaleX(0.9663);transform-origin:0 0;">Místo jednání:</div>
<div class="t" style="left:1130.28px;top:154.07px;font-size:12.5px;line-height:16px;color:#111;font-weight:normal;transform:scaleX(1.0207);transform-origin:0 0;">London</div>
<div style="position:absolute;left:961px;top:172px;width:211px;height:1px;background:#e6e6e6"></div>
<div class="t" style="left:960.44px;top:176.07px;font-size:12.5px;line-height:16px;color:#1d52a8;font-weight:normal;transform:scaleX(0.9602);transform-origin:0 0;">Datum příjezdu:</div>
<div class="t" style="left:1117.45px;top:176.07px;font-size:12.5px;line-height:16px;color:#111;font-weight:normal;transform:scaleX(0.8798);transform-origin:0 0;">27.01.2023</div>
<div style="position:absolute;left:961px;top:194px;width:211px;height:1px;background:#e6e6e6"></div>
<div class="t" style="left:960.94px;top:198.07px;font-size:12.5px;line-height:16px;color:#1d52a8;font-weight:bold;-webkit-text-stroke:0;transform:scaleX(0.9253);transform-origin:0 0;">Částka celkem:</div>
<div class="t" style="left:1047.23px;top:198.07px;font-size:12.5px;line-height:16px;color:#111;font-weight:bold;-webkit-text-stroke:0;transform:scaleX(0.9363);transform-origin:0 0;">-15,00 GBP; 180,00 E...</div>
<div style="position:absolute;left:961px;top:216px;width:211px;height:1px;background:#e6e6e6"></div>
<div class="t" style="left:960.43px;top:220.07px;font-size:12.5px;line-height:16px;color:#1d52a8;font-weight:normal;transform:scaleX(0.9726);transform-origin:0 0;">Datum vyúčtování:</div>
<div class="t" style="left:1118.07px;top:220.07px;font-size:12.5px;line-height:16px;color:#111;font-weight:normal;transform:scaleX(0.8682);transform-origin:0 0;">00.00.0000</div>
<div style="position:absolute;left:961px;top:238px;width:211px;height:1px;background:#e6e6e6"></div>
<div class="t" style="left:961.28px;top:242.07px;font-size:12.5px;line-height:16px;color:#1d52a8;font-weight:bold;-webkit-text-stroke:0;transform:scaleX(0.9379);transform-origin:0 0;">Vyúčtováno:</div>
<div class="t" style="left:1130.83px;top:242.07px;font-size:12.5px;line-height:16px;color:#111;font-weight:bold;-webkit-text-stroke:0;transform:scaleX(0.9465);transform-origin:0 0;">0,00 Kč</div>
<div style="position:absolute;left:961px;top:260px;width:211px;height:1px;background:#e6e6e6"></div>
<div style="position:absolute;left:954px;top:300px;width:225px;height:25px;background:#00aeef"></div>
<div style="position:absolute;left:1154px;top:302px;width:1px;height:21px;background:#0a94cc"></div>
<svg style="position:absolute;left:1159px;top:309px" width="15" height="8" viewBox="0 0 15 8"><path d="M1 7 L7.5 1 L14 7" stroke="#fff" stroke-width="1.4" fill="none"/></svg>
<div class="t" style="left:957.67px;top:305.22px;font-size:13.5px;line-height:17px;color:#fff;font-weight:bold;-webkit-text-stroke:0;transform:scaleX(0.9786);transform-origin:0 0;">Ostatní údaje</div>
<div style="position:absolute;left:954px;top:325px;width:225px;height:51px;background:#fcfcfc"></div>
<div class="t" style="left:961.18px;top:330.97px;font-size:12.5px;line-height:16px;color:#1d52a8;font-weight:normal;transform:scaleX(0.9848);transform-origin:0 0;">Vytvořil:</div>
<div class="t" style="left:1055.43px;top:330.97px;font-size:12.5px;line-height:16px;color:#1d52a8;font-weight:normal;transform:scaleX(0.8712);transform-origin:0 0;"><span style="color:#111">K2</span> 02.02.2023 13:53:20</div>
<div style="position:absolute;left:961px;top:347px;width:211px;height:1px;background:#e6e6e6"></div>
<div class="t" style="left:960.92px;top:352.97px;font-size:12.5px;line-height:16px;color:#1d52a8;font-weight:normal;">Změnil:</div>
<div class="t" style="left:1055.43px;top:352.97px;font-size:12.5px;line-height:16px;color:#1d52a8;font-weight:normal;transform:scaleX(0.8720);transform-origin:0 0;"><span style="color:#111">K2</span> 02.02.2023 14:16:29</div>
<div style="position:absolute;left:961px;top:369px;width:211px;height:1px;background:#e6e6e6"></div>
<div style="position:absolute;left:954px;top:678px;width:225px;height:25px;background:#00aeef"></div>
<div style="position:absolute;left:1154px;top:680px;width:1px;height:21px;background:#0a94cc"></div>
<svg style="position:absolute;left:1159px;top:687px" width="15" height="8" viewBox="0 0 15 8"><path d="M1 7 L7.5 1 L14 7" stroke="#fff" stroke-width="1.4" fill="none"/></svg>
<div class="t" style="left:957.30px;top:683.02px;font-size:13.5px;line-height:17px;color:#fff;font-weight:bold;-webkit-text-stroke:0;transform:scaleX(0.9476);transform-origin:0 0;">Nastavení</div>
<div style="position:absolute;left:954px;top:703px;width:225px;height:51px;background:#fcfcfc"></div>
<div class="t" style="left:967.99px;top:708.67px;font-size:12.5px;line-height:16px;color:#1d52a8;font-weight:normal;transform:scaleX(0.9789);transform-origin:0 0;">Období</div>
<div style="position:absolute;left:961px;top:724px;width:211px;height:23px;box-sizing:border-box;border:1px solid #22a8ec;background:#ffffe6"></div>
<div class="t" style="left:963.67px;top:728.57px;font-size:12.5px;line-height:16px;color:#111;font-weight:normal;transform:scaleX(1.0066);transform-origin:0 0;">2023</div>
<svg style="position:absolute;left:1154px;top:730px" width="14" height="12" viewBox="0 0 14 12"><rect x="1" y="1" width="3" height="3" fill="#0054a6"/><rect x="5.5" y="1" width="3" height="3" fill="#0054a6"/><rect x="10" y="1" width="3" height="3" fill="#0054a6"/><rect x="2" y="2" width="1" height="1" fill="#ffffe6"/><rect x="6.5" y="2" width="1" height="1" fill="#ffffe6"/><rect x="11" y="2" width="1" height="1" fill="#ffffe6"/><path d="M1.5 5.8 L7 10.8 L12.5 5.8" stroke="#0054a6" stroke-width="1.3" fill="none"/></svg>
</body></html>
